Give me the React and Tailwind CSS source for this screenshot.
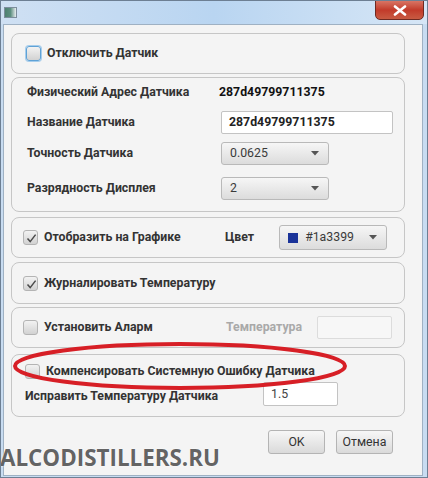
import React from 'react';

const Checkbox = ({ checked = false, focused = false }) => (
  <div
    className={`relative w-[15px] h-[15px] shrink-0 rounded-[3px] border bg-gradient-to-b from-[#f2f2f2] to-[#d2d2d2] ${
      focused ? 'border-[#5fa2d6] shadow-[0_0_0_1px_#a6cdec]' : 'border-[#b4b4b4]'
    }`}
  >
    {checked && (
      <svg className="absolute left-[2px] top-[2px]" width="11" height="11" viewBox="0 0 11 11">
        <path d="M1.5 5.5 L4.2 8.6 L9.6 1.6" fill="none" stroke="#4a4a4a" strokeWidth="1.5" />
      </svg>
    )}
  </div>
);

const Arrow = () => (
  <svg width="8" height="5" viewBox="0 0 8 5" className="shrink-0">
    <path d="M0 0 H8 L4 4.5 Z" fill="#555" />
  </svg>
);

const Combo = ({ children, className = '' }) => (
  <div
    className={`flex items-center justify-between pl-[8px] pr-[9px] rounded-[3px] border border-[#b9b9b9] bg-gradient-to-b from-[#f6f6f6] to-[#dcdcdc] text-[#3a3a3a] font-normal ${className}`}
  >
    <div className="flex items-center gap-[7px]">{children}</div>
    <Arrow />
  </div>
);

const Panel = ({ className = '', children }) => (
  <div className={`ml-[7px] w-[394px] rounded-[8px] border border-[#c6c6c6] ${className}`}>{children}</div>
);

export default function App() {
  return (
    <div className="relative w-[428px] h-[478px] overflow-hidden bg-[#c8dcf1] border border-[#6d7f93] text-[12.3px] text-[#333] font-['Roboto',sans-serif]">
      {/* title bar */}
      <div className="relative h-[23px] bg-gradient-to-r from-[#cfe0f3] via-[#b9d5f1] to-[#d6e6f6]">
        <div className="absolute left-[3px] top-[6px] w-[13px] h-[11px] border border-[#7c8d9c] bg-gradient-to-r from-[#4e8070] via-[#5d8f80] to-[#e9eef2]" />
        <div className="absolute right-[3px] top-[-1px] w-[49px] h-[20px] rounded-b-[5px] border border-[#6e2a22] bg-gradient-to-b from-[#d87464] via-[#c23a2a] to-[#c85a42] flex items-center justify-center">
          <svg width="14" height="11" viewBox="0 0 14 11">
            <path d="M2 1.5 L12 9.5 M12 1.5 L2 9.5" stroke="#fff" strokeWidth="2.6" strokeLinecap="round" />
          </svg>
        </div>
      </div>

      {/* content */}
      <div className="ml-[2px] mr-[4px] h-[452px] border border-[#9fb1c3] bg-[#f4f4f4] font-bold">
        <Panel className="mt-[8px] h-[41px] flex items-center pl-[14px] gap-[6px]">
          <Checkbox focused />
          <span>Отключить Датчик</span>
        </Panel>

        <Panel className="mt-[3px] h-[135px] pl-[15px] pt-[5px]">
          <div className="flex items-center h-[18px]">
            <span className="w-[192px]">Физический Адрес Датчика</span>
            <span className="text-[#111]">287d49799711375</span>
          </div>
          <div className="flex items-center h-[23px] mt-[10px]">
            <span className="w-[194px]">Название Датчика</span>
            <div className="w-[172px] h-[23px] flex items-center px-[7px] bg-white border border-[#c3c3c3] rounded-[2px] text-[#222]">
              287d49799711375
            </div>
          </div>
          <div className="flex items-center h-[23px] mt-[8px]">
            <span className="w-[194px]">Точность Датчика</span>
            <Combo className="w-[108px] h-[23px]">0.0625</Combo>
          </div>
          <div className="flex items-center h-[23px] mt-[12px]">
            <span className="w-[194px]">Разрядность Дисплея</span>
            <Combo className="w-[108px] h-[23px]">2</Combo>
          </div>
        </Panel>

        <Panel className="mt-[5px] h-[41px] flex items-center pl-[11px]">
          <Checkbox checked />
          <span className="ml-[6px] w-[181px]">Отобразить на Графике</span>
          <span>Цвет</span>
          <Combo className="ml-[25px] w-[108px] h-[25px]">
            <span className="w-[10px] h-[10px] bg-[#1a3399]" />
            <span>#1a3399</span>
          </Combo>
        </Panel>

        <Panel className="mt-[4px] h-[42px] flex items-center pl-[11px] gap-[6px]">
          <Checkbox checked />
          <span>Журналировать Температуру</span>
        </Panel>

        <Panel className="mt-[3px] h-[41px] flex items-center pl-[11px]">
          <Checkbox />
          <span className="ml-[6px] w-[182px]">Установить Аларм</span>
          <span className="text-[#a9a9a9] w-[91px]">Температура</span>
          <div className="w-[75px] h-[23px] bg-[#f7f7f7] border border-[#dcdcdc] rounded-[2px]" />
        </Panel>

        <Panel className="mt-[6px] h-[63px] pl-[13px] pt-[8px]">
          <div className="flex items-center gap-[6px] h-[16px]">
            <Checkbox />
            <span>Компенсировать Системную Ошибку Датчика</span>
          </div>
          <div className="flex items-center h-[24px] mt-[3px]">
            <span className="w-[238px] pt-[5px]">Исправить Температуру Датчика</span>
            <div className="w-[75px] h-[24px] flex items-center px-[7px] bg-white border border-[#c3c3c3] rounded-[2px] font-normal text-[#444]">
              1.5
            </div>
          </div>
        </Panel>

        <div className="flex justify-end gap-[11px] mr-[29px] mt-[13px] font-normal">
          <button className="w-[57px] h-[24px] rounded-[3px] border border-[#b4b4b4] bg-gradient-to-b from-[#f7f7f7] to-[#dadada] text-[#333]">
            OK
          </button>
          <button className="w-[57px] h-[24px] rounded-[3px] border border-[#b4b4b4] bg-gradient-to-b from-[#f7f7f7] to-[#dadada] text-[#333]">
            Отмена
          </button>
        </div>
      </div>

      {/* annotation ellipse */}
      <svg className="absolute left-0 top-[338px] pointer-events-none" width="360" height="56" viewBox="0 0 360 56">
        <ellipse cx="179" cy="27" rx="165" ry="22" fill="none" stroke="#d71f26" strokeWidth="4" />
      </svg>

      {/* watermark */}
      <div className="absolute left-[-1px] top-[441px] text-[22.4px] leading-[32px] font-bold text-[#646464] font-['Open_Sans',sans-serif] [text-shadow:0_0_2px_#fff,0_0_1px_#fff]">
        ALCODISTILLERS.RU
      </div>
    </div>
  );
}
